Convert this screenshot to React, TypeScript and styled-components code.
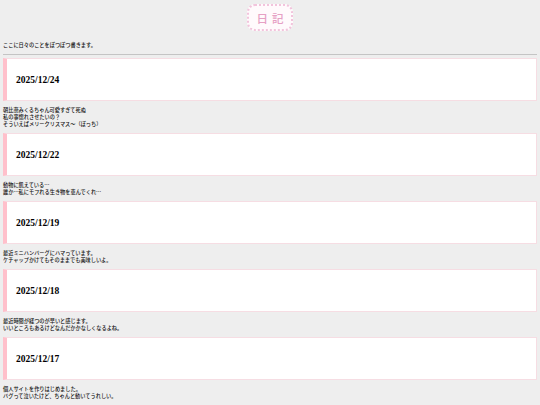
import React from 'react'
import styled, { createGlobalStyle } from 'styled-components'

const GlobalStyle = createGlobalStyle`
  html, body {
    margin: 0;
    padding: 0;
    background: #eeeeee;
  }
  body {
    font-family: "Noto Sans CJK JP", "Liberation Sans", sans-serif;
    color: #111;
  }
`

const entries = [
  {
    date: '2025/12/24',
    lines: ['朝比奈みくるちゃん可愛すぎて死ぬ', '私の事惚れさせたいの？', 'そういえばメリークリスマス～（ぼっち）'],
  },
  { date: '2025/12/22', lines: ['動物に飢えている…', '誰か…私にモフれる生き物を恵んでくれ…'] },
  { date: '2025/12/19', lines: ['最近ミニハンバーグにハマっています。', 'ケチャップかけてもそのままでも美味しいよ。'] },
  { date: '2025/12/18', lines: ['最近時間が経つのが早いと感じます。', 'いいところもあるけどなんだかかなしくなるよね。'] },
  { date: '2025/12/17', lines: ['個人サイトを作りはじめました。', 'バグって泣いたけど、ちゃんと動いてうれしい。'] },
]

export default function App() {
  return (
    <>
      <GlobalStyle />
      <Page>
        <TitleRow>
          <Title>日記</Title>
        </TitleRow>
        <Intro>ここに日々のことをぽつぽつ書きます。</Intro>
        <Rule />
        {entries.map((e) => (
          <Entry key={e.date}>
            <DateCard>{e.date}</DateCard>
            <Body>
              {e.lines.map((l, i) => (
                <Line key={i}>{l}</Line>
              ))}
            </Body>
          </Entry>
        ))}
      </Page>
    </>
  )
}

const Page = styled.main`
  padding: 4px 3px 10px;
`

const TitleRow = styled.div`
  display: flex;
  justify-content: center;
`

const Title = styled.h1`
  margin: 0;
  width: 46px;
  height: 27px;
  box-sizing: border-box;
  display: flex;
  align-items: center;
  justify-content: center;
  padding-left: 4px;
  border: 2px dotted #f2c4dc;
  border-radius: 8px;
  background: #fffafc;
  color: #e6a0c4;
  font-size: 11.5px;
  font-weight: 500;
  letter-spacing: 4px;
`

const Intro = styled.p`
  margin: 10px 0 0;
  font-size: 5.2px;
  line-height: 7px;
  font-weight: 500;
`

const Rule = styled.hr`
  margin: 6px 0 3px;
  border: none;
  border-top: 1px solid #c4c4c4;
  height: 0;
`

const Entry = styled.section`
  margin-bottom: 6px;
`

const DateCard = styled.h2`
  margin: 0;
  height: 43px;
  box-sizing: border-box;
  display: flex;
  align-items: center;
  padding-left: 9px;
  background: #fff;
  border: 1px solid #f6dde3;
  border-left: 4px solid #ffc0cb;
  font-family: "Liberation Serif", serif;
  font-size: 9.5px;
  font-weight: 700;
  color: #000;
`

const Body = styled.div`
  padding-top: 5px;
`

const Line = styled.p`
  margin: 0;
  font-size: 5.2px;
  line-height: 7px;
  font-weight: 500;
`
